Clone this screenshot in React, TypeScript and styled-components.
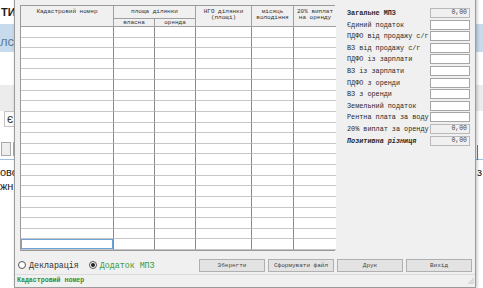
import React from "react";
import styled, { createGlobalStyle } from "styled-components";

const GlobalStyle = createGlobalStyle`
  html, body {
    margin: 0;
    padding: 0;
    width: 483px;
    height: 288px;
    overflow: hidden;
    background: #ffffff;
  }
`;

const mono = `"Liberation Mono", "DejaVu Sans Mono", monospace`;

const Desktop = styled.div`
  position: relative;
  width: 483px;
  height: 288px;
  overflow: hidden;
  font-family: ${mono};
`;

/* background application, mostly hidden by the dialog */
const BackApp = styled.div`
  display: flex;
  flex-direction: column;
  width: 483px;
  height: 288px;
  font-family: "Liberation Sans", Arial, sans-serif;
`;

const TitleRow = styled.div`
  height: 24px;
  display: flex;
  align-items: center;
  padding-left: 1px;
  font-size: 11px;
  font-weight: bold;
  color: #1c1c1c;
`;

const BlueBar = styled.div`
  height: 28px;
  background: #c8dbec;
  display: flex;
  align-items: center;
  padding-top: 6px;
  box-sizing: border-box;
  font-size: 13px;
  color: #5d7f9e;
`;

const Spacer = styled.div<{ $h: number; $bg?: string }>`
  height: ${(p) => p.$h}px;
  background: ${(p) => p.$bg || "transparent"};
`;

const FieldRow = styled.div`
  height: 16px;
  display: flex;
  padding-left: 4px;
`;

const FakeInput = styled.div`
  width: 30px;
  height: 14px;
  border: 1px solid #c4c4c4;
  background: #fbfbfb;
  font-size: 12px;
  line-height: 14px;
  padding-left: 2px;
  color: #333;
`;

const BtnRow = styled.div`
  height: 14px;
  display: flex;
  gap: 2px;
  padding-left: 1px;
`;

const FakeBtn = styled.div`
  width: 8px;
  height: 12px;
  border: 1px solid #a8a8a8;
  background: #eeeeee;
  font-size: 10px;
  line-height: 12px;
  color: #333;
`;

const BlueLine = styled.div`
  height: 1px;
  background: #9cc0e4;
  margin-top: 3px;
`;

const TextLine = styled.div`
  height: 14px;
  font-size: 11px;
  line-height: 14px;
  color: #222;
  white-space: nowrap;
`;

const RightMark = styled.div`
  position: absolute;
  left: 477px;
  top: 145px;
  width: 1px;
  height: 15px;
  background: #777;
`;

const RightText = styled.div`
  position: absolute;
  left: 477px;
  top: 166px;
  font-family: "Liberation Sans", Arial, sans-serif;
  font-size: 11px;
  color: #222;
`;

/* dialog window */
const Dialog = styled.div`
  position: absolute;
  left: 14px;
  top: -2px;
  width: 462px;
  height: 290px;
  box-sizing: border-box;
  background: #f0f0f0;
  border: 1px solid #9b9b9b;
  box-shadow: 1px 0 3px rgba(0, 0, 0, 0.25);
  display: flex;
  flex-direction: column;
`;

const Main = styled.div`
  display: flex;
  padding: 6px 3px 0 5px;
  gap: 12px;
`;

const Table = styled.div`
  display: grid;
  grid-template-columns: 93px 41px 41px 56px 42px 42px;
  grid-template-rows: 13px 8px repeat(21, 1fr);
  width: 315px;
  height: 246px;
  box-sizing: border-box;
  border: 1px solid #9a9a9a;
  background: #ffffff;
`;

const HeadCell = styled.div<{ $rows?: number; $cols?: number; $last?: boolean }>`
  grid-row: span ${(p) => p.$rows || 1};
  grid-column: span ${(p) => p.$cols || 1};
  background: #f0f0f0;
  border-right: ${(p) => (p.$last ? "none" : "1px solid #a0a0a0")};
  border-bottom: 1px solid #a0a0a0;
  font-size: 6px;
  line-height: 6px;
  color: #333;
  text-align: center;
  padding-top: 3px;
  box-sizing: border-box;
  overflow: hidden;
`;

const SubHead = styled(HeadCell)`
  padding-top: 1px;
`;

const Cell = styled.div<{ $last?: boolean; $focus?: boolean }>`
  border-right: ${(p) => (p.$last ? "none" : "1px solid #8a8a8a")};
  border-bottom: 1px solid #c6c6c6;
  box-sizing: border-box;
  background: #fff;
  ${(p) => (p.$focus ? "box-shadow: inset 0 0 0 1px #6fa3d8;" : "")}
`;

const Side = styled.div`
  display: flex;
  flex-direction: column;
  gap: 1.6px;
  margin-top: 3px;
`;

const SideRow = styled.div`
  display: flex;
  align-items: center;
  height: 10px;
`;

const SideLabel = styled.div<{ $bold?: boolean; $italic?: boolean }>`
  width: 83px;
  font-size: 6.8px;
  color: #2a2a2a;
  white-space: nowrap;
  font-weight: ${(p) => (p.$bold ? "bold" : "normal")};
  font-style: ${(p) => (p.$italic ? "italic" : "normal")};
`;

const SideInput = styled.div<{ $ro?: boolean }>`
  width: 40px;
  height: 10px;
  box-sizing: border-box;
  border: 1px solid ${(p) => (p.$ro ? "#b9b9b9" : "#a6a6a6")};
  background: ${(p) => (p.$ro ? "#f0f0f0" : "#ffffff")};
  font-size: 6.5px;
  line-height: 8px;
  text-align: right;
  padding-right: 2px;
  color: #444;
`;

const Bottom = styled.div`
  display: flex;
  align-items: center;
  height: 20px;
  margin-top: 5px;
  padding: 0 3px;
`;

const Radio = styled.label<{ $green?: boolean }>`
  display: flex;
  align-items: center;
  gap: 3px;
  font-size: 8.3px;
  color: ${(p) => (p.$green ? "#3a9a3a" : "#333")};
  margin-right: 10px;
`;

const Circle = styled.span<{ $on?: boolean }>`
  width: 8px;
  height: 8px;
  border-radius: 50%;
  border: 1px solid #555;
  background: #fff;
  box-sizing: border-box;
  display: flex;
  align-items: center;
  justify-content: center;
  &::after {
    content: "";
    width: 4px;
    height: 4px;
    border-radius: 50%;
    background: ${(p) => (p.$on ? "#222" : "transparent")};
  }
`;

const Buttons = styled.div`
  margin-left: auto;
  display: flex;
  gap: 3px;
`;

const Button = styled.div`
  width: 66px;
  height: 13px;
  box-sizing: border-box;
  border: 1px solid #b0b0b0;
  background: #e3e3e3;
  font-size: 6px;
  line-height: 11px;
  text-align: center;
  color: #444;
`;

const Status = styled.div`
  margin-top: auto;
  height: 12px;
  border-top: 1px solid #dcdcdc;
  display: flex;
  align-items: center;
  justify-content: space-between;
  padding: 0 1px 1px 2px;
  font-size: 6.6px;
  font-weight: bold;
  color: #2f8f2f;
`;

const headers = [
  { t: "Кадастровий номер", rows: 2 },
  { t: "площа ділянки", cols: 2 },
  { t: "НГО ділянки (площі)", rows: 2 },
  { t: "місяць володіння", rows: 2 },
  { t: "20% виплат на оренду", rows: 2, last: true },
];

const sideRows = [
  { label: "Загальне МПЗ", bold: true, ro: true, value: "0,00" },
  { label: "Єдиний податок" },
  { label: "ПДФО від продажу с/г" },
  { label: "ВЗ від продажу с/г" },
  { label: "ПДФО із зарплати" },
  { label: "ВЗ із зарплати" },
  { label: "ПДФО з оренди" },
  { label: "ВЗ з оренди" },
  { label: "Земельний податок" },
  { label: "Рентна плата за воду" },
  { label: "20% виплат за оренду", ro: true, value: "0,00" },
  { label: "Позитивна різниця", bold: true, italic: true, ro: true, value: "0,00" },
];

const Grip = () => (
  <svg width="6" height="6" viewBox="0 0 6 6">
    {[
      [5, 1],
      [5, 3],
      [3, 3],
      [5, 5],
      [3, 5],
      [1, 5],
    ].map(([x, y], i) => (
      <rect key={i} x={x - 0.5} y={y - 0.5} width="1" height="1" fill="#9a9a9a" />
    ))}
  </svg>
);

export default function App() {
  const rows = Array.from({ length: 21 }, (_, i) => i);
  return (
    <Desktop>
      <GlobalStyle />
      <BackApp>
        <TitleRow>ТИ Ц</TitleRow>
        <BlueBar>лс:</BlueBar>
        <Spacer $h={33} />
        <Spacer $h={26} $bg="#ececec" />
        <FieldRow>
          <FakeInput>є</FakeInput>
        </FieldRow>
        <Spacer $h={15} />
        <BtnRow>
          <FakeBtn />
          <FakeBtn>L</FakeBtn>
        </BtnRow>
        <BlueLine />
        <Spacer $h={5} />
        <TextLine>ово</TextLine>
        <TextLine>жн</TextLine>
      </BackApp>
      <RightMark />
      <RightText>з</RightText>

      <Dialog>
        <Main>
          <Table>
            {headers.map((h) => (
              <HeadCell key={h.t} $rows={h.rows} $cols={h.cols} $last={h.last}>
                {h.t}
              </HeadCell>
            ))}
            <SubHead>власна</SubHead>
            <SubHead>оренда</SubHead>
            {rows.map((r) =>
              [0, 1, 2, 3, 4, 5].map((c) => (
                <Cell key={`${r}-${c}`} $last={c === 5} $focus={r === 20 && c === 0} />
              ))
            )}
          </Table>
          <Side>
            {sideRows.map((s) => (
              <SideRow key={s.label}>
                <SideLabel $bold={s.bold} $italic={s.italic}>
                  {s.label}
                </SideLabel>
                <SideInput $ro={s.ro}>{s.value}</SideInput>
              </SideRow>
            ))}
          </Side>
        </Main>
        <Bottom>
          <Radio>
            <Circle />
            Декларація
          </Radio>
          <Radio $green>
            <Circle $on />
            Додаток МПЗ
          </Radio>
          <Buttons>
            <Button>Зберегти</Button>
            <Button>Сформувати файл</Button>
            <Button>Друк</Button>
            <Button>Вихід</Button>
          </Buttons>
        </Bottom>
        <Status>
          <span>Кадастровий номер</span>
          <Grip />
        </Status>
      </Dialog>
    </Desktop>
  );
}
